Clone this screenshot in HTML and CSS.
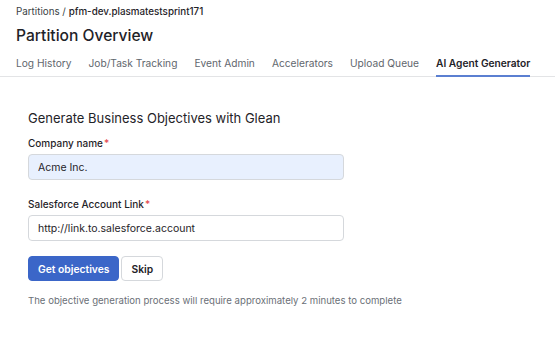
FILE: index.html
```html
<!DOCTYPE html>
<html lang="en">
<head>
    <meta charset="UTF-8">
    <title>Partition Overview</title>
    <link rel="stylesheet" href="styles.css">
</head>
<body>

<div class="header">
    <div class="crumbs">Partitions / <span class="crumb-current">pfm-dev.plasmatestsprint171</span></div>
    <h1>Partition Overview</h1>
    <div class="tabs">
        <span class="tab">Log History</span>
        <span class="tab">Job/Task Tracking</span>
        <span class="tab">Event Admin</span>
        <span class="tab">Accelerators</span>
        <span class="tab">Upload Queue</span>
        <span class="tab active">AI Agent Generator</span>
    </div>
</div>

<div class="content">
    <h2>Generate Business Objectives with Glean</h2>
    <form class="form">
        <label class="field-label">Company name<span class="req">*</span></label>
        <input type="text" class="field filled" value="Acme Inc.">
        <label class="field-label">Salesforce Account Link<span class="req">*</span></label>
        <input type="text" class="field" value="http://link.to.salesforce.account">
        <div class="actions">
            <button type="button" class="btn primary">Get objectives</button>
            <button type="button" class="btn">Skip</button>
        </div>
    </form>
    <p class="note">The objective generation process will require approximately 2 minutes to complete</p>
</div>

</body>
</html>
```

FILE: styles.css
```css
body {
    font-family: Inter, "Noto Sans", sans-serif;
    margin: 0;
    background-color: #fff;
    color: #1f2328;
}
.header {
    padding: 5px 16px 0;
    border-bottom: 1px solid #e3e4e6;
}
.crumbs {
    font-size: 9.8px;
    color: #3a3f45;
    line-height: 14px;
}
.crumb-current {
    color: #1f2328;
    font-weight: 500;
}
h1 {
    font-size: 15.6px;
    font-weight: 500;
    margin: 7px 0 0;
    line-height: 20px;
}
.tabs {
    display: flex;
    gap: 17px;
    margin-top: 7px;
}
.tab {
    font-size: 10.2px;
    color: #61666d;
    white-space: nowrap;
    padding: 4px 0 6px;
    border-bottom: 2px solid transparent;
    margin-bottom: -1px;
}
.active {
    color: #1f2328;
    font-weight: 600;
    border-bottom-color: #5b7fd1;
}
.content {
    padding: 32px 28px 0;
}
h2 {
    font-size: 13px;
    font-weight: 400;
    margin: 0 0 9px;
    line-height: 18px;
}
.form {
    display: flex;
    flex-direction: column;
    align-items: flex-start;
}
.field-label {
    font-size: 10px;
    font-weight: 500;
    line-height: 14px;
    margin-bottom: 4px;
}
.req {
    color: #e5484d;
    margin-left: 1px;
}
.field {
    box-sizing: border-box;
    width: 316px;
    height: 26px;
    padding: 0 9px;
    border: 1px solid #d5d8dc;
    border-radius: 4px;
    font-family: inherit;
    font-size: 10.5px;
    color: #1f2328;
    margin-bottom: 17px;
}
.filled {
    background-color: #e8f0fe;
}
.actions {
    display: flex;
    gap: 2px;
    margin-top: -2px;
}
.btn {
    font-family: inherit;
    font-size: 10.3px;
    font-weight: 600;
    height: 25px;
    padding: 0 9px;
    border: 1px solid #d5d8dc;
    border-radius: 4px;
    background-color: #fff;
    color: #1f2328;
}
.primary {
    background-color: #3b66c8;
    border-color: #3b66c8;
    color: #fff;
}
.note {
    font-size: 9.6px;
    color: #6b7077;
    margin: 14px 0 0;
}
```
